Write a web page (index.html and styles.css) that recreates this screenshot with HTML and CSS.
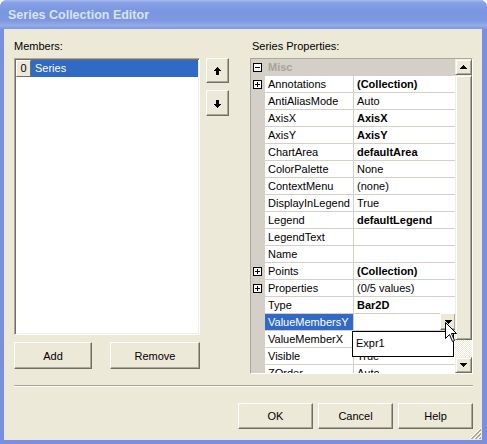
FILE: index.html
```html
<!DOCTYPE html>
<html lang="en">
<head>
    <meta charset="UTF-8">
    <title>Series Collection Editor</title>
    <link rel="stylesheet" href="styles.css">
</head>
<body>
<div class="window">
    <div class="titlebar">Series Collection Editor</div>
    <div class="client">
        <div class="top">
            <div class="members">
                <div class="caption">Members:</div>
                <div class="listbox">
                    <div class="item"><span class="index">0</span><span class="item-text">Series</span></div>
                </div>
                <div class="list-buttons">
                    <button class="btn btn-add">Add</button>
                    <button class="btn btn-remove">Remove</button>
                </div>
            </div>

            <div class="order">
                <button class="btn btn-arrow">
                    <svg width="7" height="8" shape-rendering="crispEdges"><rect x="3" y="0" width="1" height="1"/><rect x="2" y="1" width="3" height="1"/><rect x="1" y="2" width="5" height="1"/><rect x="0" y="3" width="7" height="1"/><rect x="2" y="4" width="3" height="4"/></svg>
                </button>
                <button class="btn btn-arrow">
                    <svg width="7" height="8" shape-rendering="crispEdges"><rect x="2" y="0" width="3" height="4"/><rect x="0" y="4" width="7" height="1"/><rect x="1" y="5" width="5" height="1"/><rect x="2" y="6" width="3" height="1"/><rect x="3" y="7" width="1" height="1"/></svg>
                </button>
            </div>

            <div class="props">
                <div class="caption">Series Properties:</div>
                <div class="grid">
                    <div class="rows">
                        <div class="category">
                            <span class="margin"><svg class="expander" width="9" height="9" shape-rendering="crispEdges"><rect x="0.5" y="0.5" width="8" height="8" fill="#fff" stroke="#000"/><rect x="2" y="4" width="5" height="1"/></svg></span>
                            <span class="category-text">Misc</span>
                        </div>
                        <div class="row">
                            <span class="margin"><svg class="expander" width="9" height="9" shape-rendering="crispEdges"><rect x="0.5" y="0.5" width="8" height="8" fill="#fff" stroke="#000"/><rect x="2" y="4" width="5" height="1"/><rect x="4" y="2" width="1" height="5"/></svg></span>
                            <span class="name">Annotations</span><span class="value bold">(Collection)</span>
                        </div>
                        <div class="row"><span class="margin"></span><span class="name">AntiAliasMode</span><span class="value">Auto</span></div>
                        <div class="row"><span class="margin"></span><span class="name">AxisX</span><span class="value bold">AxisX</span></div>
                        <div class="row"><span class="margin"></span><span class="name">AxisY</span><span class="value bold">AxisY</span></div>
                        <div class="row"><span class="margin"></span><span class="name">ChartArea</span><span class="value bold">defaultArea</span></div>
                        <div class="row"><span class="margin"></span><span class="name">ColorPalette</span><span class="value">None</span></div>
                        <div class="row"><span class="margin"></span><span class="name">ContextMenu</span><span class="value">(none)</span></div>
                        <div class="row"><span class="margin"></span><span class="name">DisplayInLegend</span><span class="value">True</span></div>
                        <div class="row"><span class="margin"></span><span class="name">Legend</span><span class="value bold">defaultLegend</span></div>
                        <div class="row"><span class="margin"></span><span class="name">LegendText</span><span class="value"></span></div>
                        <div class="row"><span class="margin"></span><span class="name">Name</span><span class="value"></span></div>
                        <div class="row">
                            <span class="margin"><svg class="expander" width="9" height="9" shape-rendering="crispEdges"><rect x="0.5" y="0.5" width="8" height="8" fill="#fff" stroke="#000"/><rect x="2" y="4" width="5" height="1"/><rect x="4" y="2" width="1" height="5"/></svg></span>
                            <span class="name">Points</span><span class="value bold">(Collection)</span>
                        </div>
                        <div class="row">
                            <span class="margin"><svg class="expander" width="9" height="9" shape-rendering="crispEdges"><rect x="0.5" y="0.5" width="8" height="8" fill="#fff" stroke="#000"/><rect x="2" y="4" width="5" height="1"/><rect x="4" y="2" width="1" height="5"/></svg></span>
                            <span class="name">Properties</span><span class="value">(0/5 values)</span>
                        </div>
                        <div class="row"><span class="margin"></span><span class="name">Type</span><span class="value bold">Bar2D</span></div>
                        <div class="row">
                            <span class="margin"></span><span class="name selected">ValueMembersY</span>
                            <span class="value">
                                <span class="drop-btn"><svg width="7" height="4" shape-rendering="crispEdges"><rect x="0" y="0" width="7" height="1"/><rect x="1" y="1" width="5" height="1"/><rect x="2" y="2" width="3" height="1"/><rect x="3" y="3" width="1" height="1"/></svg></span>
                            </span>
                        </div>
                        <div class="row"><span class="margin"></span><span class="name">ValueMemberX</span><span class="value"></span></div>
                        <div class="row"><span class="margin"></span><span class="name">Visible</span><span class="value">True</span></div>
                        <div class="row"><span class="margin"></span><span class="name">ZOrder</span><span class="value">Auto</span></div>
                    </div>

                    <div class="vscroll">
                        <span class="sb-btn"><svg width="7" height="4" shape-rendering="crispEdges"><rect x="3" y="0" width="1" height="1"/><rect x="2" y="1" width="3" height="1"/><rect x="1" y="2" width="5" height="1"/><rect x="0" y="3" width="7" height="1"/></svg></span>
                        <span class="sb-thumb"></span>
                        <span class="sb-track"></span>
                        <span class="sb-btn"><svg width="7" height="4" shape-rendering="crispEdges"><rect x="0" y="0" width="7" height="1"/><rect x="1" y="1" width="5" height="1"/><rect x="2" y="2" width="3" height="1"/><rect x="3" y="3" width="1" height="1"/></svg></span>
                    </div>

                    <div class="dropdown">Expr1</div>
                </div>
            </div>
        </div>

        <div class="separator"></div>

        <div class="dialog-buttons">
            <button class="btn btn-dialog">OK</button>
            <button class="btn btn-dialog">Cancel</button>
            <button class="btn btn-dialog">Help</button>
        </div>

        <svg class="grip" width="12" height="12" shape-rendering="crispEdges">
            <path d="M11 0L0 11M11 4L4 11M11 8L8 11" stroke="#fff" fill="none"/>
            <path d="M11 1L1 11M11 2L2 11M11 5L5 11M11 6L6 11M11 9L9 11M11 10L10 11" stroke="#aca899" fill="none"/>
        </svg>
    </div>

    <svg class="cursor" width="14" height="22">
        <path d="M1.5 1.5V17.5L5.5 13.5L8.5 20.5L10.5 19.5L7.5 12.5H12.5Z" fill="#fff" stroke="#000" stroke-linejoin="miter"/>
    </svg>
</div>
</body>
</html>
```

FILE: styles.css
```css
* {
    box-sizing: border-box;
}

body {
    margin: 0;
    background: #fff;
    font-family: "Liberation Sans", Arial, sans-serif;
    font-size: 11px;
    color: #000;
}

.window {
    position: relative;
    width: 487px;
    height: 444px;
    display: flex;
    flex-direction: column;
    background: #7a8fdd;
    border-radius: 7px 7px 0 0;
    overflow: hidden;
}

.titlebar {
    height: 29px;
    padding: 8px 0 0 8px;
    font-size: 12.5px;
    font-weight: bold;
    color: #d8e2f8;
    background: linear-gradient(#a6baef 0, #86a0e4 3px, #7b96e0 40%, #7d98e1 70%, #93abe9 88%, #7e97e0 100%);
}

.client {
    position: relative;
    flex: 1;
    margin: 0 5px 4px 4px;
    padding: 11px 9px 0 10px;
    background: #ece9d8;
}

.top {
    display: flex;
    height: 334px;
}

.caption {
    height: 13px;
    line-height: 13px;
    margin-bottom: 5px;
}

/* left: members list */
.members {
    width: 186px;
}

.listbox {
    height: 277px;
    background: #fff;
    border: 1px solid;
    border-color: #aca899 #fff #fff #aca899;
    box-shadow: inset 1px 1px #716f64, inset -1px -1px #f1efe2;
    padding: 1px;
}

.item {
    display: flex;
    height: 17px;
    line-height: 17px;
}

.index {
    width: 15px;
    text-align: center;
    background: #ece9d8;
    border: 1px solid;
    border-color: #fff #716f64 #716f64 #fff;
    line-height: 15px;
}

.item-text {
    flex: 1;
    padding-left: 4px;
    background: #316ac5;
    color: #fff;
}

.list-buttons {
    display: flex;
    justify-content: space-between;
    margin-top: 7px;
}

.btn {
    display: flex;
    align-items: center;
    justify-content: center;
    padding: 0;
    font: inherit;
    color: #000;
    background: #ece9d8;
    border: 1px solid;
    border-color: #fff #716f64 #716f64 #fff;
    box-shadow: inset -1px -1px #aca899;
}

.btn-add {
    width: 78px;
    height: 27px;
}

.btn-remove {
    width: 90px;
    height: 27px;
}

/* middle: up / down */
.order {
    display: flex;
    flex-direction: column;
    gap: 7px;
    width: 23px;
    margin-left: 6px;
    padding-top: 18px;
}

.btn-arrow {
    width: 23px;
    height: 25px;
    padding-top: 1px;
}

.btn-arrow + .btn-arrow {
    height: 26px;
}

/* right: property grid */
.props {
    width: 223px;
    margin-left: 21px;
}

.props .caption {
    padding-left: 2px;
}

.grid {
    position: relative;
    display: flex;
    height: 316px;
    border: 1px solid;
    border-color: #aca899 #fff #fff #aca899;
    overflow: visible;
}

.rows {
    width: 204px;
    height: 314px;
    overflow: hidden;
    background: #d4d0c8;
}

.category,
.row {
    display: flex;
    height: 17px;
    line-height: 16px;
}

.category {
    background: #d4d0c8;
}

.margin {
    width: 14px;
    padding: 4px 0 0 2px;
    background: #d4d0c8;
}

.expander {
    display: block;
}

.category-text {
    padding-left: 3px;
    font-weight: bold;
    color: #a7a49a;
}

.name {
    width: 88px;
    padding-left: 3px;
    background: #fff;
    border-bottom: 1px solid #d4d0c8;
    white-space: nowrap;
    overflow: hidden;
}

.name.selected {
    background: #316ac5;
    color: #fff;
}

.value {
    display: flex;
    width: 102px;
    padding-left: 3px;
    background: #fff;
    border-left: 1px solid #d4d0c8;
    border-bottom: 1px solid #d4d0c8;
    white-space: nowrap;
}

.bold {
    font-weight: bold;
}

.drop-btn {
    display: flex;
    align-items: center;
    justify-content: center;
    width: 16px;
    height: 17px;
    margin: -1px -1px 0 auto;
    background: #ece9d8;
    border: 1px solid;
    border-color: #fff #716f64 #716f64 #fff;
    box-shadow: inset -1px -1px #aca899;
}

.vscroll {
    display: flex;
    flex-direction: column;
    width: 17px;
    height: 314px;
}

.sb-btn,
.sb-thumb {
    display: flex;
    align-items: center;
    justify-content: center;
    background: #ece9d8;
    border: 1px solid;
    border-color: #f1efe2 #716f64 #716f64 #f1efe2;
    box-shadow: inset 1px 1px #fff, inset -1px -1px #aca899;
}

.sb-btn {
    height: 16px;
}

.sb-thumb {
    height: 265px;
}

.sb-track {
    height: 17px;
    background: repeating-conic-gradient(#fff 0 25%, #ece9d8 0 50%) 0 0 / 2px 2px;
}

.dropdown {
    position: absolute;
    left: 101px;
    top: 272px;
    width: 102px;
    height: 26px;
    padding: 5px 0 0 3px;
    background: #fff;
    border: 1px solid #000;
    font-size: 11px;
}

.separator {
    margin-top: 11px;
    height: 2px;
    border-top: 1px solid #aca899;
    border-bottom: 1px solid #fff;
}

.dialog-buttons {
    display: flex;
    justify-content: flex-end;
    gap: 5px;
    margin-top: 16px;
}

.btn-dialog {
    width: 75px;
    height: 26px;
}

.grip {
    position: absolute;
    right: 0;
    bottom: 0;
}

.cursor {
    position: absolute;
    left: 444px;
    top: 321px;
}
```
